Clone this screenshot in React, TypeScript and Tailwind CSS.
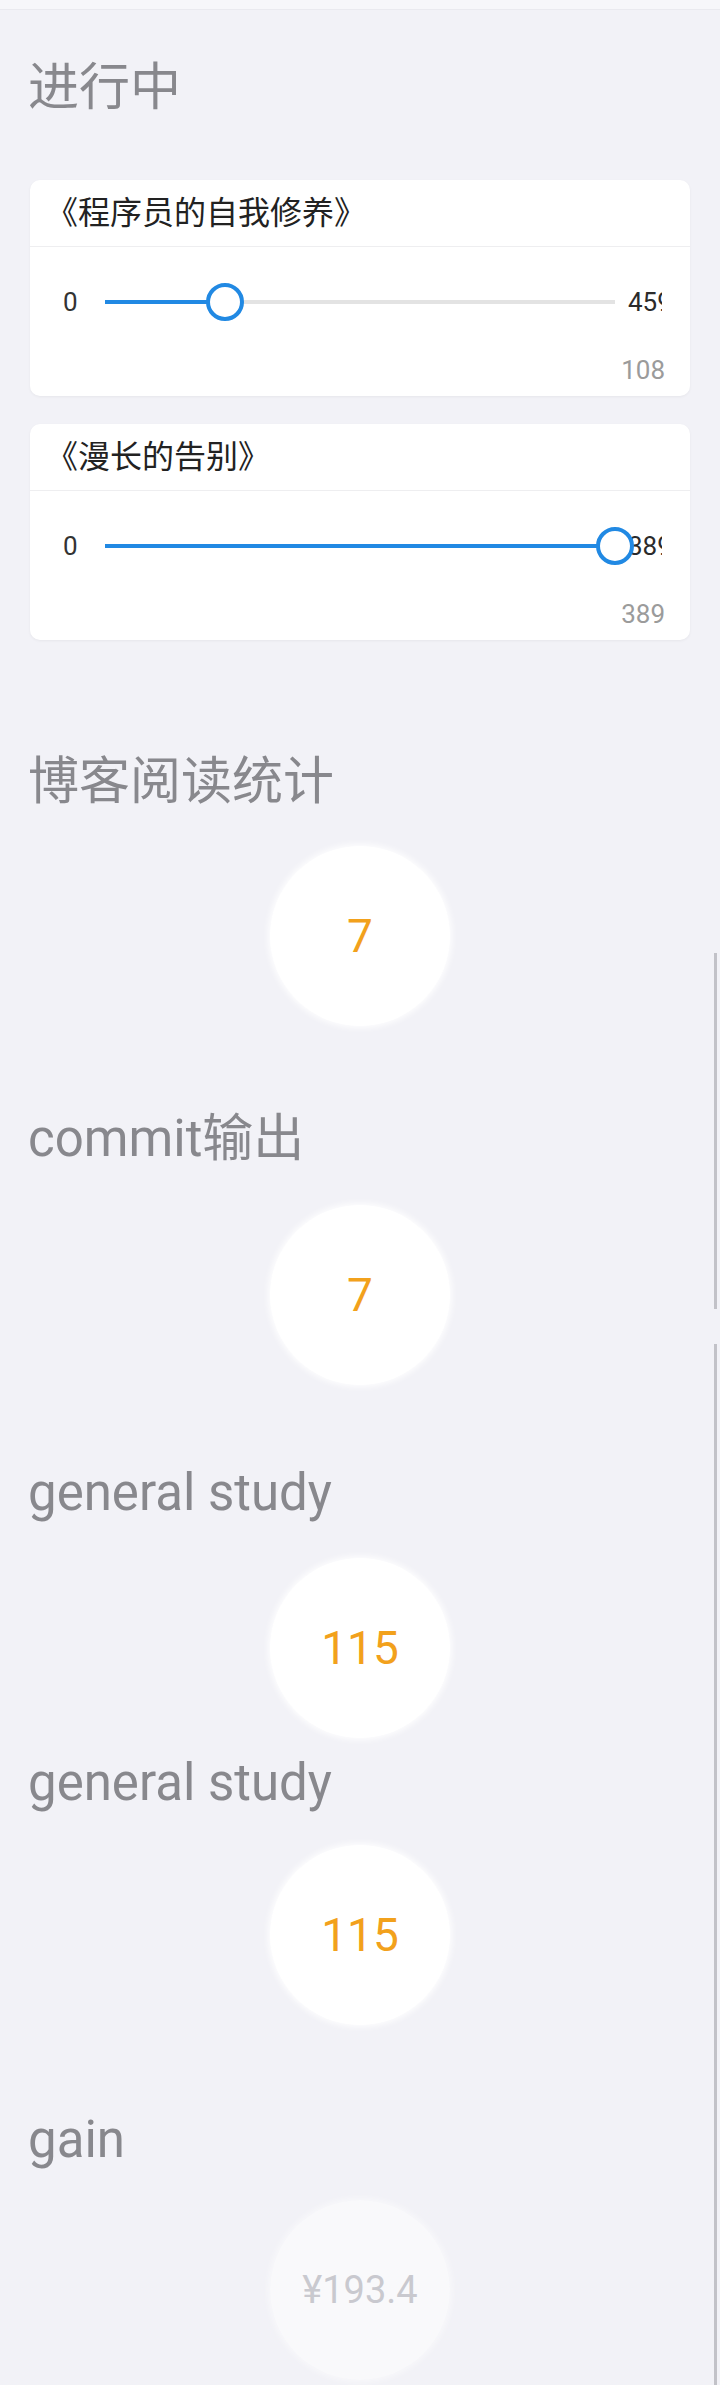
import React from 'react';

type Book = { title: string; value: number; max: number };

const books: Book[] = [
  { title: '《程序员的自我修养》', value: 108, max: 459 },
  { title: '《漫长的告别》', value: 389, max: 389 },
];

const BookCard: React.FC<{ book: Book; className?: string }> = ({ book, className }) => {
  const pct = book.value / book.max;
  return (
    <div className={`mx-[30px] rounded-[10px] bg-white shadow-[0_1px_3px_rgba(0,0,0,0.05)] ${className ?? ''}`}>
      <div className="h-[67px] flex items-center px-4 border-b border-[#eeeef0]">
        <span className="text-[32px] leading-[40px] text-[#222]">{book.title}</span>
      </div>

      {/* seekbar */}
      <div className="pt-[36px] flex items-center pl-[33px]">
        <span className="w-[16px] text-[26px] leading-[30px] text-[#333]">0</span>
        <div className="relative ml-[26px] w-[510px] h-[38px]">
          <div className="absolute left-0 right-0 top-[17px] h-[4px] bg-[#e3e3e3]" />
          <div className="absolute left-0 top-[17px] h-[4px] bg-[#2189e3]" style={{ width: `${pct * 100}%` }} />
          <div
            className="absolute top-0 w-[38px] h-[38px] rounded-full border-[4px] border-[#2189e3] bg-white"
            style={{ left: `calc(${pct * 100}% - 19px)` }}
          />
        </div>
        <div className="ml-[13px] w-[34px] overflow-hidden whitespace-nowrap text-[26px] leading-[30px] text-[#2b2b2b]">
          {book.max}
        </div>
      </div>

      <div className="mt-[34px] pb-[11px] pr-[25px] text-right text-[26px] leading-[30px] text-[#9b9b9b]">
        {book.value}
      </div>
    </div>
  );
};

const Heading: React.FC<{ text: string; className?: string }> = ({ text, className }) => (
  <div className={`pl-[28px] text-[51px] leading-[56px] text-[#88888d] ${className ?? ''}`}>{text}</div>
);

const Bubble: React.FC<{ text: string; className?: string; faded?: boolean }> = ({ text, className, faded }) => (
  <div className={`flex justify-center ${className ?? ''}`}>
    <div
      className={`w-[180px] h-[180px] rounded-full flex items-center justify-center ${
        faded
          ? 'bg-white/50 shadow-[0_0_6px_2px_rgba(255,255,255,0.5)]'
          : 'bg-white shadow-[0_0_6px_2px_rgba(255,255,255,0.9)]'
      }`}
    >
      {faded ? (
        <span className="text-[38px] leading-none text-[#c9c9cf]">{text}</span>
      ) : (
        <span className="text-[46px] leading-none text-[#f2a11c]">{text}</span>
      )}
    </div>
  </div>
);

export default function App() {
  return (
    <div className="relative min-h-[2385px] bg-[#f2f2f7] overflow-hidden font-[Roboto,'Noto_Sans_CJK_SC',sans-serif]">
      <div className="h-[10px] bg-[#f7f7fa] border-b border-[#eaeaef]" />

      <Heading text="进行中" className="mt-[50px]" />

      <BookCard book={books[0]} className="mt-[64px]" />
      <BookCard book={books[1]} className="mt-[28px]" />

      <Heading text="博客阅读统计" className="mt-[114px]" />
      <Bubble text="7" className="mt-[36px]" />

      <Heading text="commit输出" className="mt-[85px]" />
      <Bubble text="7" className="mt-[38px]" />

      <Heading text="general study" className="mt-[80px]" />
      <Bubble text="115" className="mt-[37px]" />

      <Heading text="general study" className="mt-[17px]" />
      <Bubble text="115" className="mt-[34px]" />

      <Heading text="gain" className="mt-[87px]" />
      <Bubble text="¥193.4" faded className="mt-[32px]" />

      {/* scroll indicators */}
      <div className="absolute left-[714px] top-[953px] w-[3px] h-[356px] bg-[#c2c2c8]" />
      <div className="absolute left-[714px] top-[1344px] w-[3px] h-[1041px] bg-[#c2c2c8]" />
    </div>
  );
}
